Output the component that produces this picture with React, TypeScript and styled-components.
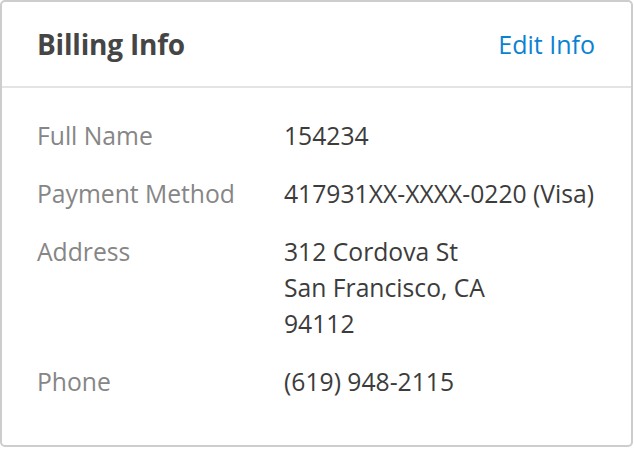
import React from 'react';
import styled, { createGlobalStyle } from 'styled-components';

const GlobalStyle = createGlobalStyle`
  html, body {
    margin: 0;
    padding: 0;
    background: #ffffff;
  }
  body {
    font-family: 'Open Sans', 'Noto Sans', sans-serif;
  }
`;

const Card = styled.section`
  box-sizing: border-box;
  width: 633px;
  height: 447px;
  border: 2px solid #cdcdcd;
  border-radius: 5px;
  background: #fff;
`;

const Header = styled.header`
  display: flex;
  align-items: center;
  justify-content: space-between;
  height: 84px;
  padding: 0 36px 0 35px;
  border-bottom: 2px solid #e4e4e4;
`;

const Title = styled.h2`
  margin: 0;
  font-size: 28px;
  font-weight: 700;
  letter-spacing: -0.2px;
  color: #454545;
`;

const EditLink = styled.a`
  font-size: 25px;
  color: #0a82d2;
  text-decoration: none;
  cursor: pointer;
`;

const Body = styled.dl`
  display: grid;
  grid-template-columns: 247px 1fr;
  row-gap: 22px;
  margin: 0;
  padding: 30px 35px;
  font-size: 24.7px;
  line-height: 36px;
`;

const Label = styled.dt`
  color: #868686;
`;

const Value = styled.dd`
  margin: 0;
  color: #3c3c3c;
`;

const rows: { label: string; value: string[] }[] = [
  { label: 'Full Name', value: ['154234'] },
  { label: 'Payment Method', value: ['417931XX-XXXX-0220 (Visa)'] },
  { label: 'Address', value: ['312 Cordova St', 'San Francisco, CA', '94112'] },
  { label: 'Phone', value: ['(619) 948-2115'] },
];

const App: React.FC = () => (
  <>
    <GlobalStyle />
    <Card>
      <Header>
        <Title>Billing Info</Title>
        <EditLink>Edit Info</EditLink>
      </Header>
      <Body>
        {rows.map((row) => (
          <React.Fragment key={row.label}>
            <Label>{row.label}</Label>
            <Value>
              {row.value.map((line) => (
                <div key={line}>{line}</div>
              ))}
            </Value>
          </React.Fragment>
        ))}
      </Body>
    </Card>
  </>
);

export default App;
